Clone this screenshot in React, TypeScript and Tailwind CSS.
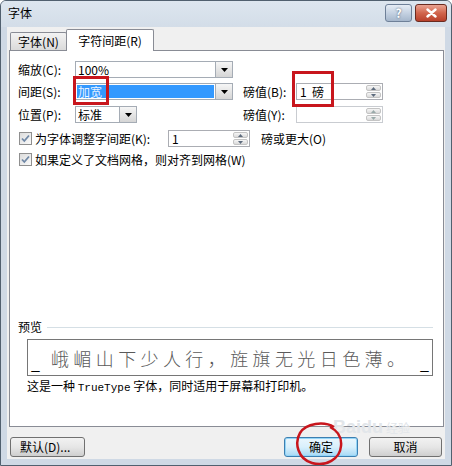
import React from "react";

const F = { fontFamily: '"Noto Sans CJK SC", "Noto Sans", sans-serif' };

function DropBtn() {
  return (
    <div className="w-[17px] h-full border-l border-[#a5acb5] bg-gradient-to-b from-[#f6f6f6] to-[#d5d5d5] flex items-center justify-center">
      <svg width="7" height="4" viewBox="0 0 7 4"><path d="M0 0h7L3.5 4z" fill="#000" /></svg>
    </div>
  );
}

function Spin({ value, w, disabled }: { value?: string; w: string; disabled?: boolean }) {
  return (
    <div className={`${w} h-[17px] border ${disabled ? "border-[#c9ccd1]" : "border-[#abadb3]"} bg-white flex items-stretch`}>
      <div className="flex-1 flex items-center pl-[3px] text-[12px] leading-none text-black whitespace-pre">{value}</div>
      <div className="w-[15px] flex flex-col m-[1px] gap-[1px]">
        <div className="flex-1 bg-gradient-to-b from-[#f6f6f6] to-[#dadada] border border-[#c4c4c4] rounded-[2px] flex items-center justify-center">
          <svg width="5" height="3" viewBox="0 0 5 3"><path d="M0 3h5L2.5 0z" fill={disabled ? "#9aa" : "#5d6b7d"} /></svg>
        </div>
        <div className="flex-1 bg-gradient-to-b from-[#f6f6f6] to-[#dadada] border border-[#c4c4c4] rounded-[2px] flex items-center justify-center">
          <svg width="5" height="3" viewBox="0 0 5 3"><path d="M0 0h5L2.5 3z" fill={disabled ? "#9aa" : "#5d6b7d"} /></svg>
        </div>
      </div>
    </div>
  );
}

function Check() {
  return (
    <div className="w-[13px] h-[13px] border border-[#8f8f8f] bg-gradient-to-br from-[#dcdcdc] to-[#fafafa] flex items-center justify-center">
      <svg width="9" height="9" viewBox="0 0 9 9"><path d="M1 4.5l2.3 2.5L8 1.5" stroke="#7088a6" strokeWidth="1.8" fill="none" /></svg>
    </div>
  );
}

export default function App() {
  return (
    <div style={F} className="relative w-[452px] h-[466px] bg-[#cfd9e5] border border-[#51606f] rounded-t-[6px] flex flex-col overflow-hidden text-[12px] text-black">
      {/* title bar */}
      <div className="h-[26px] flex items-start bg-gradient-to-b from-[#dde6ef] to-[#d3dde8]">
        <div className="pl-[7px] pt-[4px] text-[12px] leading-[16px]">字体</div>
        <div className="ml-auto mt-[3px] mr-[4px] flex gap-[3px]">
          <div className="w-[27px] h-[18px] rounded-[3px] border border-[#6e8098] bg-gradient-to-b from-[#e6edf5] via-[#c5d2e2] to-[#a6b7cc] flex items-center justify-center text-white font-bold text-[12px] leading-none" style={{ textShadow: "0 0 2px #3b4b60" }}>?</div>
          <div className="w-[32px] h-[18px] rounded-[3px] border border-[#6a2b20] bg-gradient-to-b from-[#e9a392] via-[#d1654d] to-[#b8402b] flex items-center justify-center">
            <svg width="11" height="10" viewBox="0 0 11 10"><path d="M1.5 1.5l8 7M9.5 1.5l-8 7" stroke="#fff" strokeWidth="2.4" strokeLinecap="round" /></svg>
          </div>
        </div>
      </div>

      {/* client */}
      <div className="flex-1 mx-[6px] mb-[6px] bg-[#f0f0f0] flex flex-col">
        {/* tabs */}
        <div className="mt-[2px] ml-[3px] h-[21px] flex items-end relative z-10">
          <div className="w-[57px] h-[18px] border border-b-0 border-[#898c95] rounded-t-[2px] bg-gradient-to-b from-[#f3f3f3] to-[#dadada] flex items-center justify-center leading-none">字体(N)</div>
          <div className="w-[88px] h-[22px] -mb-px -ml-px border border-b-0 border-[#898c95] rounded-t-[2px] bg-white flex items-center justify-center leading-none">字符间距(R)</div>
        </div>
        {/* panel */}
        <div className="ml-[2px] w-[435px] h-[377px] border border-[#898c95] bg-white flex flex-col pl-[8px] pt-[10px]">
          {/* row 1 */}
          <div className="flex items-center h-[17px]">
            <div className="w-[57px] leading-none">缩放(C):</div>
            <div className="w-[158px] h-[17px] border border-[#a5acb5] bg-white flex">
              <div className="flex-1 pl-[2px] flex items-center leading-none">100%</div>
              <DropBtn />
            </div>
          </div>
          {/* row 2 */}
          <div className="flex items-center h-[17px] mt-[5px]">
            <div className="w-[57px] leading-none">间距(S):</div>
            <div className="w-[158px] h-[17px] border border-[#a5acb5] bg-white flex">
              <div className="flex-1 m-[1px] bg-[#3399ff] pl-[1px] flex items-center leading-none text-[#e8f2ff]">加宽</div>
              <DropBtn />
            </div>
            <div className="ml-[10px] w-[53px] leading-none">磅值(B):</div>
            <Spin value={"1  磅"} w="w-[87px]" />
          </div>
          {/* row 3 */}
          <div className="flex items-center h-[17px] mt-[6px]">
            <div className="w-[57px] leading-none">位置(P):</div>
            <div className="w-[62px] h-[17px] border border-[#a5acb5] bg-white flex">
              <div className="flex-1 pl-[2px] flex items-center leading-none">标准</div>
              <DropBtn />
            </div>
            <div className="ml-[106px] w-[53px] leading-none">磅值(Y):</div>
            <Spin w="w-[87px]" disabled />
          </div>
          {/* row 4 */}
          <div className="flex items-center h-[17px] mt-[7px]">
            <div className="ml-[1px]"><Check /></div>
            <div className="ml-[3px] w-[133px] leading-none">为字体调整字间距(K):</div>
            <Spin value="1" w="w-[82px]" />
            <div className="ml-[11px] leading-none">磅或更大(O)</div>
          </div>
          {/* row 5 */}
          <div className="flex items-center h-[15px] mt-[5px]">
            <div className="ml-[1px]"><Check /></div>
            <div className="ml-[3px] leading-none">如果定义了文档网格，则对齐到网格(W)</div>
          </div>

          {/* preview */}
          <div className="mt-[153px] flex items-center h-[14px]">
            <div className="leading-none">预览</div>
            <div className="flex-1 ml-[5px] mr-[10px] h-px bg-[#d5dfe5]" />
          </div>
          <div className="mt-[5px] ml-[9px] mr-[10px] h-[37px] border border-[#767676] bg-white flex items-center px-[3px] relative">
            <span className="self-end mb-[4px] text-[16px] leading-none">_</span>
            <span className="ml-[11px] text-[18px] font-light leading-none tracking-[4.4px] text-[#5a5a5a] whitespace-nowrap">峨嵋山下少人行，旌旗无光日色薄。</span>
            <span className="ml-auto self-end mb-[4px] text-[16px] leading-none">_</span>
          </div>
          <div className="mt-[4px] ml-[9px] leading-none whitespace-nowrap">
            这是一种 <span style={{ fontFamily: '"Liberation Mono", monospace' }} className="text-[11px]">TrueType</span> 字体，同时适用于屏幕和打印机。
          </div>
        </div>

        {/* buttons */}
        <div className="mt-[10px] flex items-center">
          <div className="ml-[3px] w-[75px] h-[20px] rounded-[3px] border border-[#707070] bg-gradient-to-b from-[#f2f2f2] via-[#e6e6e6] to-[#cfcfcf] flex items-center pl-[9px] leading-none">默认(D)...</div>
          <div className="ml-auto w-[74px] h-[20px] rounded-[3px] border border-[#3c7fb1] bg-gradient-to-b from-[#eaf6fd] via-[#d9f0fc] to-[#a7d9f5] shadow-[inset_0_0_0_1px_#94d5f7] flex items-center justify-center leading-none">确定</div>
          <div className="ml-[11px] mr-[3px] w-[73px] h-[20px] rounded-[3px] border border-[#707070] bg-gradient-to-b from-[#f2f2f2] via-[#e6e6e6] to-[#cfcfcf] flex items-center justify-center leading-none">取消</div>
        </div>
      </div>

      {/* watermark */}
      <div className="absolute left-[332px] top-[417px] text-[18px] font-bold text-[#e2e6ea] leading-none pointer-events-none" style={{ fontFamily: '"Liberation Sans", sans-serif' }}>Baidu<span className="ml-[3px] text-[12px] font-normal" style={F}>经验</span></div>

      {/* annotations */}
      <div className="absolute left-[72px] top-[75px] w-[36px] h-[29px] border-[3px] border-[#c8161d] pointer-events-none" />
      <div className="absolute left-[291px] top-[70px] w-[42px] h-[36px] border-[3px] border-[#c8161d] pointer-events-none" />
      <svg className="absolute left-[293px] top-[420px] pointer-events-none" width="52" height="46" viewBox="0 0 52 46">
        <path d="M40 6 C30 0 12 2 6 12 C0 22 4 38 18 42 C32 46 46 38 47 25 C48 16 44 10 36 6" stroke="#c8161d" strokeWidth="2.5" fill="none" />
      </svg>
    </div>
  );
}
